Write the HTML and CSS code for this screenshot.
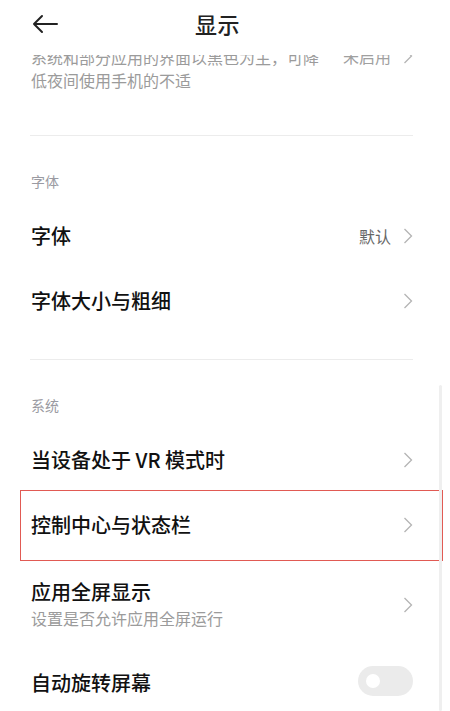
FILE: index.html
```html
<!DOCTYPE html>
<html lang="zh-CN">
<head>
    <meta charset="UTF-8">
    <title>显示</title>
    <link rel="stylesheet" href="styles.css">
</head>
<body>
<div class="screen">
    <!-- Top bar -->
    <div class="topbar">
        <svg class="back" width="26" height="20" viewBox="0 0 26 20">
            <path d="M25 10H2M10 2L2 10l8 8" fill="none" stroke="#222" stroke-width="2" stroke-linecap="round" stroke-linejoin="round"/>
        </svg>
        <div class="title">显示</div>
    </div>

    <!-- Scrolled list -->
    <div class="viewport">
        <div class="list">
            <div class="row row-tall">
                <div class="row-text">
                    <div class="row-title">深色模式</div>
                    <div class="row-sub">系统和部分应用的界面以黑色为主，可降<br>低夜间使用手机的不适</div>
                </div>
                <span class="value faded">未启用</span>
                <svg class="chev" width="10" height="18" viewBox="0 0 10 18"><path d="M1.5 2l7 7-7 7" fill="none" stroke="#b4b4b4" stroke-width="1.3"/></svg>
            </div>
            <div class="gap-first"></div>

            <div class="divider"></div>
            <div class="label">字体</div>
            <div class="row">
                <div class="row-title">字体</div>
                <span class="value">默认</span>
                <svg class="chev" width="10" height="18" viewBox="0 0 10 18"><path d="M1.5 2l7 7-7 7" fill="none" stroke="#b4b4b4" stroke-width="1.3"/></svg>
            </div>
            <div class="row">
                <div class="row-title">字体大小与粗细</div>
                <svg class="chev" width="10" height="18" viewBox="0 0 10 18"><path d="M1.5 2l7 7-7 7" fill="none" stroke="#b4b4b4" stroke-width="1.3"/></svg>
            </div>
            <div class="gap"></div>

            <div class="divider"></div>
            <div class="label">系统</div>
            <div class="row">
                <div class="row-title">当设备处于 VR 模式时</div>
                <svg class="chev" width="10" height="18" viewBox="0 0 10 18"><path d="M1.5 2l7 7-7 7" fill="none" stroke="#b4b4b4" stroke-width="1.3"/></svg>
            </div>
            <div class="row marked">
                <div class="row-title">控制中心与状态栏</div>
                <svg class="chev" width="10" height="18" viewBox="0 0 10 18"><path d="M1.5 2l7 7-7 7" fill="none" stroke="#b4b4b4" stroke-width="1.3"/></svg>
            </div>
            <div class="row row-two">
                <div class="row-text">
                    <div class="row-title">应用全屏显示</div>
                    <div class="row-sub">设置是否允许应用全屏运行</div>
                </div>
                <svg class="chev" width="10" height="18" viewBox="0 0 10 18"><path d="M1.5 2l7 7-7 7" fill="none" stroke="#b4b4b4" stroke-width="1.3"/></svg>
            </div>
            <div class="row">
                <div class="row-title">自动旋转屏幕</div>
                <div class="toggle"><span class="knob"></span></div>
            </div>
        </div>
        <div class="scrollbar"></div>
    </div>
</div>
</body>
</html>
```

FILE: styles.css
```css
* { box-sizing: border-box; }
html, body { margin: 0; padding: 0; background: #fff; }
body { font-family: "Noto Sans CJK SC", "Noto Sans", sans-serif; color: #111; }
.screen { width: 450px; height: 711px; overflow: hidden; display: flex; flex-direction: column; }

.topbar { height: 55px; flex: none; display: flex; align-items: center; padding-left: 32px; background: #fff; position: relative; z-index: 2; }
.back { display: block; margin-top: -7px; }
.title { margin-left: 137px; margin-top: -9px; font-size: 22px; font-weight: 500; color: #222; letter-spacing: 0.5px; }

.viewport { flex: 1; overflow: hidden; position: relative; }
.list { margin-top: -58px; }

.row { display: flex; align-items: center; min-height: 65px; padding: 0 37px 0 31px; position: relative; }
.row-tall { padding-top: 22px; padding-bottom: 22px; }
.row-two { padding-top: 22px; padding-bottom: 20px; }
.row-text { display: flex; flex-direction: column; flex: 1; }
.row-title { flex: 1; font-size: 20px; line-height: 26px; font-weight: 500; color: #111; }
.row-sub { font-size: 16px; line-height: 23px; color: #9b9b9b; margin-top: 1px; }
.row-two .row-sub { line-height: 24px; }
.value { font-size: 16px; color: #666; margin-right: 12px; }
.value.faded { color: #a0a0a0; }
.chev { display: block; flex: none; }

.gap-first { height: 21px; }
.gap { height: 26px; }
.divider { height: 1px; background: #ececec; margin: 0 37px 0 30px; }
.label { font-size: 14px; line-height: 20px; color: #9a9aa2; padding: 35px 31px 12px; }

.marked::after { content: ""; position: absolute; left: 20px; right: 7px; top: -2px; bottom: -4px; border: 1.5px solid #e15a54; pointer-events: none; }

.toggle { width: 55px; height: 30px; border-radius: 15px; background: #ebebeb; display: flex; align-items: center; padding-left: 8px; margin-top: -4px; }
.knob { width: 14px; height: 14px; border-radius: 50%; background: #fff; }

.scrollbar { position: absolute; right: 8px; top: 330px; bottom: 0; width: 3px; border-radius: 2px; background: #efefef; }
```
